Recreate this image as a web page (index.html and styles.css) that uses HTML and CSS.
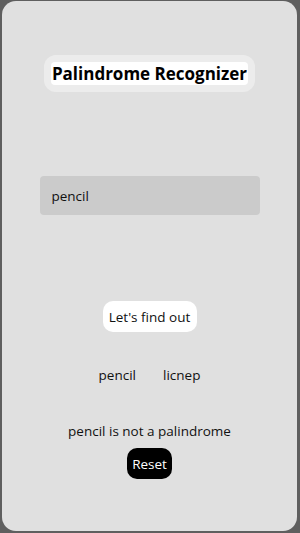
FILE: index.html
```html
<!DOCTYPE html>
<html lang="en">
<head>
    <meta charset="UTF-8">
    <meta name="viewport" content="width=device-width, initial-scale=1.0">
    <title>Palindrome Recognizer</title>
    <link rel="stylesheet" href="styles.css">
</head>
<body>
    <div class="app">
        <div class="title-box">
            <h1>Palindrome Recognizer</h1>
        </div>
        <input type="text" class="word-input" value="pencil">
        <button type="button" class="check-button">Let's find out</button>
        <div class="words">
            <span>pencil</span>
            <span>licnep</span>
        </div>
        <p class="result">pencil is not a palindrome</p>
        <button type="button" class="reset-button">Reset</button>
    </div>
</body>
</html>
```

FILE: styles.css
```css
body, html {
    margin: 0;
    padding: 0;
    font-family: "Open Sans", "Noto Sans", sans-serif;
    background-color: #5f5f5f;
}

.app {
    margin: 1px 3px 2px 2px;
    height: 530px;
    border-radius: 14px;
    background-color: #e0e0e0;
    display: flex;
    flex-direction: column;
    align-items: center;
    box-sizing: border-box;
    padding-top: 54px;
}

.title-box {
    background-color: #ececec;
    padding: 7px;
    border-radius: 12px;
}

.title-box h1 {
    margin: 0;
    background-color: #fff;
    border-radius: 4px;
    font-size: 17px;
    line-height: 23px;
    height: 23px;
    padding: 0 1px;
    color: #000;
}

.word-input {
    margin-top: 84px;
    width: 220px;
    height: 39px;
    box-sizing: border-box;
    border: none;
    border-radius: 4px;
    background-color: #cbcbcb;
    padding: 0 12px;
    font-family: inherit;
    font-size: 13.5px;
    color: #111;
    outline: none;
}

.check-button {
    margin-top: 86px;
    width: 94px;
    height: 31px;
    border: none;
    border-radius: 10px;
    background-color: #fff;
    font-family: inherit;
    font-size: 13.5px;
    color: #111;
    padding: 0;
}

.words {
    margin-top: 34px;
    display: flex;
    gap: 27px;
    font-size: 13.5px;
    line-height: 18px;
    color: #111;
}

.result {
    margin: 38px 0 0;
    font-size: 13.5px;
    line-height: 18px;
    color: #111;
}

.reset-button {
    margin-top: 8px;
    width: 45px;
    height: 31px;
    border: none;
    border-radius: 10px;
    background-color: #000;
    color: #fff;
    font-family: inherit;
    font-size: 13.5px;
    padding: 0;
}
```
